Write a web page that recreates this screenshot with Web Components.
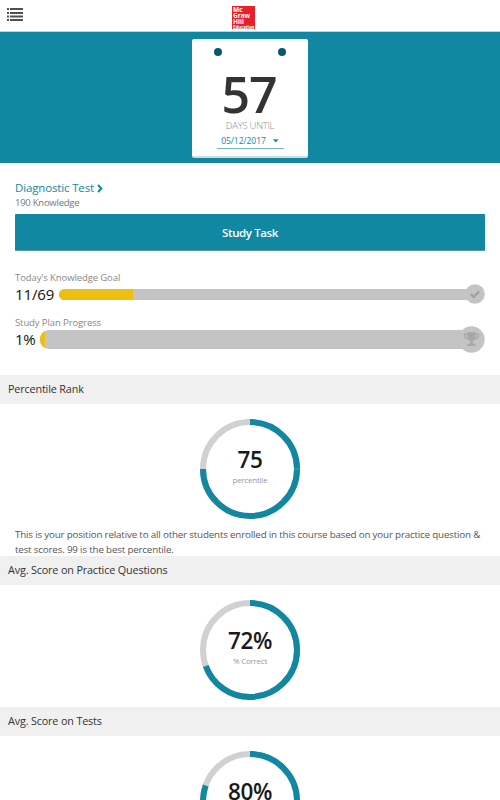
<!DOCTYPE html>
<html lang="en">
<head>
<meta charset="utf-8">
<title>Study Dashboard</title>
<style>
  body {
    margin: 0;
    height: 800px;
    overflow: hidden;
    background: #fff;
    color: #222;
    font-family: "Open Sans", "Liberation Sans", sans-serif;
    --teal: #1187a1;
    --grey: #c4c4c4;
  }
</style>
</head>
<body>
<top-bar></top-bar>
<day-counter days="57" date="05/12/2017"></day-counter>
<study-task name="Diagnostic Test" detail="190 Knowledge">Study Task</study-task>
<progress-goal label="Today's Knowledge Goal" value="11/69" fill="73.5" icon="check"></progress-goal>
<progress-goal label="Study Plan Progress" value="1%" fill="4.5" icon="trophy"></progress-goal>
<score-section heading="Percentile Rank" style="margin-top: 24px">
  <score-ring value="75" unit="percentile" percent="75" seam></score-ring>
  <span slot="note">This is your position relative to all other students enrolled in this course based on your practice question &amp; test scores. 99 is the best percentile.</span>
</score-section>
<score-section heading="Avg. Score on Practice Questions">
  <score-ring value="72%" unit="% Correct" percent="69.5"></score-ring>
</score-section>
<score-section heading="Avg. Score on Tests" style="margin-top: 7px">
  <score-ring value="80%" unit="% Correct" percent="80.4"></score-ring>
</score-section>

<script>
// Top bar with the menu icon and the logo
class TopBar extends HTMLElement {
  constructor() {
    super();
    this.attachShadow({ mode: 'open' });
  }

  connectedCallback() {
    this.shadowRoot.innerHTML = `
      <style>
        :host {
          display: grid;
          grid-template-columns: 232px 23px 1fr;
          box-sizing: border-box;
          height: 32px;
          border-bottom: 1px solid #c9d3d6;
          background: #fff;
        }
        .menu { margin: 8px 0 0 7px; }
        .logo {
          box-sizing: border-box;
          width: 23px;
          height: 23px;
          margin-top: 6px;
          padding: 1px 0 0 1px;
          background: #e8202a;
          color: #fff;
          font-size: 6.5px;
          font-weight: 700;
          line-height: 6px;
          white-space: nowrap;
        }
        .logo div { height: 6px; }
        .logo .small { font-size: 4.3px; line-height: 4px; height: 4px; }
      </style>
      <svg class="menu" width="17" height="14" fill="#505050">
        <path d="M0 0h2v2H0zM3 0h13v2H3zM0 4h2v2H0zM3 4h13v2H3zM0 7.5h2v2H0zM3 7.5h13v2H3zM0 11h2v2H0zM3 11h13v2H3z"/>
      </svg>
      <div class="logo"><div>Mc</div><div>Graw</div><div>Hill</div><div class="small">Education</div></div>
    `;
  }
}

// Calendar card with the days that are left
class DayCounter extends HTMLElement {
  constructor() {
    super();
    this.attachShadow({ mode: 'open' });
  }

  connectedCallback() {
    this.shadowRoot.innerHTML = `
      <style>
        :host {
          display: flex;
          justify-content: center;
          box-sizing: border-box;
          height: 131px;
          padding-top: 7px;
          background: var(--teal);
        }
        .card {
          display: flex;
          flex-direction: column;
          align-items: center;
          box-sizing: border-box;
          width: 116px;
          height: 119px;
          border-bottom: 2px solid #d3dadc;
          border-radius: 2px;
          background: #fff;
        }
        .pins {
          display: flex;
          justify-content: space-between;
          width: 72px;
          margin-top: 9px;
        }
        .pins i {
          width: 8px;
          height: 8px;
          border-radius: 50%;
          background: #07596b;
        }
        .days {
          margin: 13px 2px 0 0;
          height: 50px;
          color: #333;
          font-size: 50px;
          font-weight: 600;
          letter-spacing: -1px;
          line-height: 51px;
        }
        .until {
          color: #8c8c8c;
          font-size: 9.5px;
          font-weight: 300;
          letter-spacing: -.25px;
          line-height: 13px;
        }
        .date {
          display: flex;
          align-items: center;
          justify-content: center;
          gap: 7px;
          width: 67px;
          height: 14px;
          margin-top: 2px;
          border-bottom: 1px solid #78b5c2;
          color: var(--teal);
          font-size: 8.5px;
          letter-spacing: -.05px;
          line-height: 14px;
        }
      </style>
      <div class="card">
        <div class="pins"><i></i><i></i></div>
        <div class="days">${this.getAttribute('days')}</div>
        <div class="until">DAYS UNTIL</div>
        <div class="date">
          <span>${this.getAttribute('date')}</span>
          <svg width="6" height="4"><path d="M0 .3h5.6L2.8 3.5z" fill="#1187a1"/></svg>
        </div>
      </div>
    `;
  }
}

// Current test and the button that starts the task
class StudyTask extends HTMLElement {
  constructor() {
    super();
    this.attachShadow({ mode: 'open' });
  }

  connectedCallback() {
    this.shadowRoot.innerHTML = `
      <style>
        :host { display: block; padding: 16px 15px 0; }
        .name {
          display: flex;
          align-items: center;
          gap: 3px;
          height: 17px;
          color: var(--teal);
          font-size: 11.5px;
          letter-spacing: -.15px;
          line-height: 16px;
        }
        .name svg { margin-top: 2px; }
        .detail {
          height: 18px;
          color: #777;
          font-size: 9.5px;
          letter-spacing: -.25px;
          line-height: 13px;
        }
        button {
          display: block;
          width: 100%;
          height: 37px;
          padding: 0;
          border: 0;
          border-bottom: 1px solid #5b98a6;
          border-radius: 1px;
          background: var(--teal);
          color: #fff;
          font: 600 11.5px/37px "Open Sans", sans-serif;
          letter-spacing: -.4px;
        }
      </style>
      <div class="name">
        <span>${this.getAttribute('name')}</span>
        <svg width="6" height="9" fill="none" stroke="#1187a1" stroke-width="2"><path d="M1 1l3.3 3.5L1 8"/></svg>
      </div>
      <div class="detail">${this.getAttribute('detail')}</div>
      <button><slot></slot></button>
    `;
  }
}

// Progress bar that ends in a round badge
class ProgressGoal extends HTMLElement {
  constructor() {
    super();
    this.attachShadow({ mode: 'open' });
  }

  icons = {
    check: `
      <svg width="20" height="20">
        <circle cx="10" cy="10" r="9.8" fill="#c4c4c4"/>
        <path d="M5.8 10.2l2.8 2.7 5.6-5.4" fill="none" stroke="#a4a4a4" stroke-width="2.5"/>
      </svg>`,
    trophy: `
      <svg width="27" height="27">
        <circle cx="13.5" cy="13.5" r="13.2" fill="#c4c4c4"/>
        <path d="M9.5 8.2H6.6c0 3 1.2 4.7 4 5M17.5 8.2h2.9c0 3-1.2 4.7-4 5" fill="none" stroke="#a7a7a7" stroke-width="1.3"/>
        <path d="M9.3 6.3h8.4v4.2c0 2.4-1.2 3.8-3 4.5v2.5c1.6.3 3.2.8 3.2 2.6H9.1c0-1.8 1.6-2.3 3.2-2.6V15c-1.8-.7-3-2.1-3-4.5z" fill="#a7a7a7"/>
      </svg>`
  };

  connectedCallback() {
    const icon = this.getAttribute('icon');
    this.shadowRoot.innerHTML = `
      <style>
        :host { display: block; }
        .label {
          color: #888;
          font-size: 9.5px;
          letter-spacing: -.1px;
          line-height: 13px;
          height: 13px;
        }
        .row { display: flex; align-items: center; }
        .value {
          margin-bottom: 2px;
          color: #111;
          font-size: 15px;
          letter-spacing: -.1px;
          line-height: 20px;
        }
        .bar {
          flex: 1;
          overflow: hidden;
          background: var(--grey);
        }
        .fill { width: ${this.getAttribute('fill')}px; height: 100%; background: #edbf10; }
        svg { display: block; }
        .bar, svg { margin-bottom: 2px; }
        .check { padding: 20px 15px 0; }
        .check .row { height: 22px; }
        .check .value { width: 44px; }
        .check .bar { height: 11px; border-radius: 6px 0 0 6px; margin-right: -4px; }
        .trophy { padding: 10px 15px 0; }
        .trophy .row { height: 22px; }
        .trophy .value { width: 25px; letter-spacing: -.4px; }
        .trophy .bar { height: 19px; border-radius: 9px 0 0 9px; margin-right: -8px; }
      </style>
      <div class="${icon}">
        <div class="label">${this.getAttribute('label')}</div>
        <div class="row">
          <div class="value">${this.getAttribute('value')}</div>
          <div class="bar"><div class="fill"></div></div>
          ${this.icons[icon]}
        </div>
      </div>
    `;
  }
}

// Grey heading with its content and an optional note
class ScoreSection extends HTMLElement {
  constructor() {
    super();
    this.attachShadow({ mode: 'open' });
  }

  connectedCallback() {
    this.shadowRoot.innerHTML = `
      <style>
        :host { display: block; }
        .heading {
          height: 28.5px;
          padding-left: 8px;
          background: #f0f0f0;
          color: #333;
          font-size: 10.8px;
          letter-spacing: -.15px;
          line-height: 28px;
        }
        .body { padding-top: 15.5px; }
        .note {
          padding: 0 15px;
          color: #555;
          font-size: 9.8px;
          letter-spacing: -.18px;
          line-height: 15px;
        }
        ::slotted([slot=note]) { display: block; padding-top: 7.5px; margin-bottom: -.5px; }
      </style>
      <div class="heading">${this.getAttribute('heading')}</div>
      <div class="body"><slot></slot></div>
      <div class="note"><slot name="note"></slot></div>
    `;
  }
}

// Ring chart: the arc starts at the top and runs clockwise
class ScoreRing extends HTMLElement {
  constructor() {
    super();
    this.attachShadow({ mode: 'open' });
  }

  connectedCallback() {
    const seam = this.hasAttribute('seam') ? '<path d="M94 50h6" stroke="#6fb6c5" stroke-width=".6"/>' : '';
    this.shadowRoot.innerHTML = `
      <style>
        :host {
          display: grid;
          justify-content: center;
        }
        svg, .text { grid-area: 1 / 1; }
        .text {
          display: flex;
          flex-direction: column;
          align-items: center;
          padding-top: 26px;
        }
        .value {
          color: #1a1a1a;
          font-size: 22.5px;
          font-weight: 600;
          letter-spacing: -.4px;
          line-height: 30px;
        }
        .unit {
          color: #999;
          font-size: 8px;
          letter-spacing: -.25px;
          line-height: 10px;
        }
      </style>
      <svg width="100" height="100" fill="none" stroke-width="6">
        <circle cx="50" cy="50" r="47" stroke="#d1d1d1"/>
        <circle cx="50" cy="50" r="47" stroke="#1187a1" pathLength="100"
          stroke-dasharray="${this.getAttribute('percent')} 100" transform="rotate(-90 50 50)"/>
        ${seam}
      </svg>
      <div class="text">
        <div class="value">${this.getAttribute('value')}</div>
        <div class="unit">${this.getAttribute('unit')}</div>
      </div>
    `;
  }
}

customElements.define('top-bar', TopBar);
customElements.define('day-counter', DayCounter);
customElements.define('study-task', StudyTask);
customElements.define('progress-goal', ProgressGoal);
customElements.define('score-section', ScoreSection);
customElements.define('score-ring', ScoreRing);
</script>
</body>
</html>
